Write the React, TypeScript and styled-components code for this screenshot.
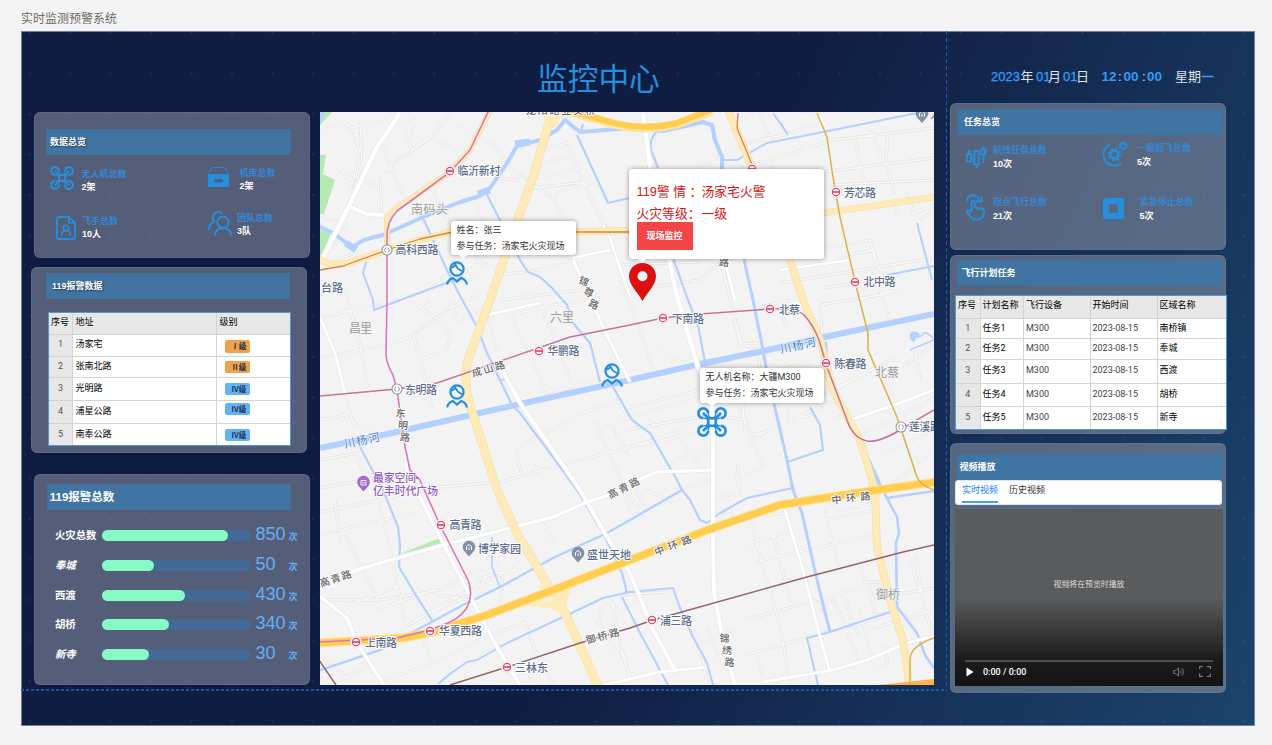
import React from "react";
import styled, { createGlobalStyle, css } from "styled-components";

const cjk = `"Noto Sans CJK SC", sans-serif`;
const BLUE = "#258fdc";

const GlobalStyle = createGlobalStyle`
  *, *::before, *::after { box-sizing: border-box; }
  html, body { margin: 0; padding: 0; background: #f4f4f4; overflow: hidden; }
  body { font-family: "Liberation Sans", ${cjk}; font-size: 9px; color: #333; }
`;

const Page = styled.div`
  width: 1272px;
  height: 745px;
  padding: 0 17px 0 21px;
  display: flex;
  flex-direction: column;
  overflow: hidden;
`;

const PageName = styled.div`
  height: 31px;
  padding-top: 9px;
  font: 12px/17px ${cjk};
  color: #6a6a6a;
`;

const Dashboard = styled.div`
  position: relative;
  width: 1234px;
  height: 695px;
  display: flex;
  align-items: flex-start;
  box-shadow: inset 0 0 0 1px #71809b;
  background:
    radial-gradient(circle at 8.5px 2px, rgba(150, 175, 220, 0.1) 0 0.7px, transparent 1.7px) 0 0 / 40.5px 40.5px,
    linear-gradient(114deg, #101d42 0%, #101d42 52%, #163057 76%, #1c446c 100%);
`;

const MainArea = styled.div`
  width: 926px;
  height: 660px;
  background:
    repeating-linear-gradient(90deg, #1757a6 0 3px, transparent 3px 5px) 0 100% / 100% 2px no-repeat,
    repeating-linear-gradient(180deg, #1f5fa8 0 4px, transparent 4px 7px) 100% 0 / 1px 100% no-repeat;
`;

const TitleBar = styled.div`
  height: 81px;
  padding: 25px 0 0 516px;
`;

const Title = styled.h1`
  margin: 0;
  font: 400 30.7px/42px ${cjk};
  color: ${BLUE};
  white-space: nowrap;
`;

const Columns = styled.div`
  display: flex;
`;

const LeftColumn = styled.div`
  width: 299px;
  display: flex;
  flex-direction: column;
`;

const RightColumn = styled.div`
  width: 307px;
  padding-left: 3px;
  display: flex;
  flex-direction: column;
`;

const Panel = styled.section<{ $h: number; $ml?: number; $mt?: number }>`
  width: 275.5px;
  height: ${(p) => p.$h}px;
  margin: ${(p) => p.$mt ?? 0}px 0 0 ${(p) => p.$ml ?? 0}px;
  border-radius: 6px;
  background: rgba(152, 159, 174, 0.5);
  box-shadow: inset 0 0 0 1px rgba(125, 140, 165, 0.25);
  display: flex;
  flex-direction: column;
  flex: none;
`;

const PanelTitle = styled.h2<{ $w: number; $ml: number; $mt: number; $pl: number; $size?: number; $glow?: boolean }>`
  width: ${(p) => p.$w}px;
  height: 26px;
  margin: ${(p) => p.$mt}px 0 0 ${(p) => p.$ml}px;
  padding-left: ${(p) => p.$pl}px;
  font: 700 ${(p) => p.$size ?? 9}px/24px "Liberation Sans", ${cjk};
  color: #fff;
  background: #4074a3;
  border: 1px solid #476f97;
  white-space: nowrap;
  ${(p) => p.$glow && css`text-shadow: 1px 1px 2px rgba(0, 0, 0, 0.55);`}
`;

const StatGrid = styled.div<{ $cols: string; $rows: string }>`
  display: grid;
  grid-template-columns: ${(p) => p.$cols};
  grid-template-rows: ${(p) => p.$rows};
`;

const StatItem = styled.div<{ $x: number; $y: number }>`
  display: flex;
  align-items: flex-start;
  padding: ${(p) => p.$y}px 0 0 ${(p) => p.$x}px;
`;

const StatIcon = styled.div<{ $w: number; $mt: number }>`
  width: ${(p) => p.$w}px;
  margin-top: ${(p) => p.$mt}px;
  flex: none;
  svg { display: block; }
`;

const StatText = styled.div<{ $lh: number }>`
  font: 700 9px/${(p) => p.$lh}px "Liberation Sans", ${cjk};
  white-space: nowrap;
  color: #fff;
`;

const StatLabel = styled.div`
  font-weight: 700;
  color: #3587d6;
`;

const Table = styled.div<{ $w: number; $ml: number; $mt: number }>`
  width: ${(p) => p.$w}px;
  margin: ${(p) => p.$mt}px 0 0 ${(p) => p.$ml}px;
  border: 1px solid #4d9ad6;
  background: #fff;
`;

const Row = styled.div<{ $cols: string; $h: number; $head?: boolean }>`
  display: grid;
  grid-template-columns: ${(p) => p.$cols};
  height: ${(p) => p.$h}px;
  font: 9px/${(p) => p.$h - 2}px Roboto, ${cjk};
  color: #000;
  background: ${(p) => (p.$head ? "#e7e7e7" : "#fff")};
  & + & { border-top: 1px solid #d4d4d4; }
`;

const Cell = styled.div<{ $tone?: "index" | "num" }>`
  padding-left: 2px;
  white-space: nowrap;
  overflow: hidden;
  & + & { border-left: 1px solid #d4d4d4; }
  ${(p) => p.$tone === "index" && css`background: #e7e7e7; color: #555; padding: 0; text-align: center;`}
  ${(p) => p.$tone === "num" && css`color: #444;`}
`;

const Badge = styled.span<{ $color: string; $mt: number }>`
  display: block;
  width: 25px;
  height: 12.5px;
  margin: ${(p) => p.$mt}px 0 0 6px;
  padding-right: 4px;
  border-radius: 2px;
  background: ${(p) => p.$color};
  font: 700 7.6px/12px ${cjk};
  color: #28324a;
  text-align: right;
`;

const Bars = styled.div`
  padding: 11px 0 0 20.5px;
`;

const BarRow = styled.div`
  display: flex;
  height: 29.8px;
`;

const BarName = styled.div<{ $italic?: boolean }>`
  width: 47px;
  font: ${(p) => (p.$italic ? "italic" : "normal")} 700 10.4px/28px ${cjk};
  color: #fff;
`;

const Track = styled.div`
  width: 149px;
  height: 11px;
  margin-top: 9px;
  border-radius: 6px;
  background: #426a94;
`;

const Fill = styled.div`
  height: 11px;
  border-radius: 6px;
  background: #87fac6;
`;

const BarValue = styled.div`
  width: 37.5px;
  padding-left: 4.5px;
  font: 18px/26px "Liberation Sans", sans-serif;
  color: #62b0f7;
`;

const BarUnit = styled.div`
  font: 700 9px/32px ${cjk};
  color: #62b0f7;
`;

/* ---------- map ---------- */

const MapBox = styled.div`
  position: relative;
  width: 614px;
  height: 573px;
  background: #f3f3f3;
  overflow: hidden;
  > svg { display: block; }
`;

const Pin = styled.div<{ $x: number; $y: number }>`
  position: absolute;
  left: ${(p) => p.$x}px;
  top: ${(p) => p.$y}px;
  svg { display: block; }
`;

const Callout = styled.div<{ $x: number; $y: number; $w: number; $h: number; $tip: number }>`
  position: absolute;
  left: ${(p) => p.$x}px;
  top: ${(p) => p.$y}px;
  width: ${(p) => p.$w}px;
  height: ${(p) => p.$h}px;
  padding: 2px 0 0 5.5px;
  border-radius: 3px;
  background: #fff;
  box-shadow: 0 0 5px rgba(0, 0, 0, 0.4);
  font: 9px/15.5px Roboto, ${cjk};
  color: #333;
  white-space: nowrap;
  &::after {
    content: "";
    position: absolute;
    left: ${(p) => p.$tip}px;
    bottom: -4px;
    border: 4px solid transparent;
    border-top-color: #fff;
    border-bottom: 0;
  }
`;

const AlarmText = styled.div`
  padding-left: 2px;
  font: 12.8px/22px "Liberation Sans", ${cjk};
  color: #d81414;
  display: flex;
`;

const AlarmKey = styled.span`
  width: 65px;
  flex: none;
`;

const WatchButton = styled.button`
  display: block;
  width: 56px;
  height: 28px;
  margin: -3px 0 0 2px;
  padding: 0;
  border: 0;
  background: #f54446;
  font: 700 9px/28px ${cjk};
  color: #fff;
`;

/* ---------- right side ---------- */

const DateLine = styled.div`
  height: 72px;
  padding: 35.5px 0 0 41px;
  display: flex;
  font: 13px/20px "Liberation Sans", ${cjk};
  color: #dfe6f0;
  white-space: nowrap;
`;

const Part = styled.span<{ $w: number; $blue?: boolean; $bold?: boolean }>`
  width: ${(p) => p.$w}px;
  color: ${(p) => (p.$blue ? "#2f9bf7" : "#dfe3ea")};
  font-weight: ${(p) => (p.$bold ? 700 : 400)};
  ${(p) => p.$bold && css`font-size: 13.5px;`}
  ${(p) => p.$blue && !p.$bold && css`-webkit-text-stroke: 0.3px #2f9bf7;`}
`;

const Tabs = styled.div`
  width: 267px;
  height: 25px;
  margin: 0 0 4px 5px;
  padding-left: 6px;
  display: flex;
  gap: 11px;
  border-radius: 3px;
  background: #fff;
  border: 1px solid #dce6f0;
`;

const Tab = styled.div<{ $active?: boolean }>`
  height: 22px;
  font: 9px/18px ${cjk};
  color: ${(p) => (p.$active ? "#1683ff" : "#333")};
  border-bottom: ${(p) => (p.$active ? "2px solid #45a0fb" : "0")};
`;

const Video = styled.div`
  width: 268px;
  height: 177.5px;
  margin-left: 5px;
  display: flex;
  flex-direction: column;
  background: linear-gradient(#5a5b5c 0%, #5a5b5c 50%, #1b1b1b 85%, #141414 100%);
`;

const VideoHint = styled.div`
  padding-top: 66.5px;
  height: 151px;
  text-align: center;
  font: 7.9px/17px ${cjk};
  color: #dcdcdc;
`;

const Seek = styled.div`
  height: 2px;
  margin: 0 10px;
  background: #4f4f4f;
`;

const Controls = styled.div`
  display: flex;
  align-items: center;
  height: 20px;
  padding: 0 12px 0 11px;
  font: 500 9px/20px Roboto, sans-serif;
  color: #fff;
  svg { display: block; }
`;

const Time = styled.span`
  margin-left: 9px;
  flex: 1;
`;

const Speaker = styled.span`
  margin-right: 14px;
`;

/* ---------- icons ---------- */

const DroneIcon = ({ size = 24 }: { size?: number }) => (
  <svg width={size} height={size} viewBox="0 0 24 24" fill="none" stroke={BLUE} strokeWidth="2.1">
    <path d="M8.9 5A3.9 3.9 0 1 0 5 8.9M15.1 5A3.9 3.9 0 1 1 19 8.9M8.9 19A3.9 3.9 0 1 1 5 15.1M15.1 19A3.9 3.9 0 1 0 19 15.1" />
    <path d="M4.8 4.8 9 9M19.2 4.8 15 9M4.8 19.2 9 15M19.2 19.2 15 15" />
    <rect x="9" y="9" width="6" height="6" />
    <path d="M5 8.9Q8 8.8 8.9 11M8.9 5Q8.8 8 11 8.9M15.1 5Q15.2 8 13 8.9M19 8.9Q16 8.8 15.1 11M5 15.1Q8 15.2 8.9 13M8.9 19Q8.8 16 11 15.1M19 15.1Q16 15.2 15.1 13M15.1 19Q15.2 16 13 15.1" strokeWidth="1" />
  </svg>
);

const HangarIcon = () => (
  <svg width="21" height="20" viewBox="0 0 21 20">
    <path d="M.6 7 4.2.6h12.6L20.4 7" fill="none" stroke={BLUE} strokeWidth="1" />
    <path d="M0 7h21v13H0zM7.4 12a1.5 1.5 0 0 0 0 3.2h6.2a1.5 1.5 0 0 0 0-3.2z" fill={BLUE} fillRule="evenodd" />
  </svg>
);

const PilotIcon = () => (
  <svg width="20" height="24" viewBox="0 0 20 24" fill="none" stroke={BLUE} strokeWidth="1.8">
    <path d="M12.8 1H2.4Q1 1 1 2.4v19.2Q1 23 2.4 23h15.2q1.400 0 1.400-1.400V7z" />
    <path d="M12.800 1v5.800H19" strokeWidth="1.500" />
    <circle cx="10" cy="12" r="2.700" strokeWidth="1.600" />
    <path d="M5.400 19.600q.4-5 4.600-5t4.600 5" strokeWidth="1.600" />
  </svg>
);

const TeamIcon = () => (
  <svg width="24" height="25" viewBox="0 0 24 25" fill="none" stroke={BLUE} strokeWidth="1.900">
    <circle cx="15" cy="11.200" r="5.600" />
    <path d="M7 24.500q.6-7.500 8-7.500t8 7.500" />
    <path d="M14.500 3A5.300 5.300 0 1 0 6 10M7 10.500Q1 12.500 1 19" />
  </svg>
);

const RouteIcon = () => (
  <svg width="21" height="23" viewBox="0 0 21 23" fill="none" stroke={BLUE} strokeWidth="1.900">
    <rect x="1.200" y="9" width="4" height="7.600" />
    <path d="M3.200 5v4" />
    <rect x="8.300" y="6" width="4.400" height="13.500" />
    <path d="M10.500 19.500V23" />
    <rect x="15.400" y="4.500" width="4" height="4.500" />
    <path d="M17.400 1v3.500M17.400 9v9" />
  </svg>
);

const GearsIcon = () => (
  <svg width="26" height="26" viewBox="0 0 26 26" fill="none" stroke={BLUE}>
    <path d="M8 3.500A11 11 0 1 0 19.500 22" strokeWidth="2" />
    <circle cx="12.500" cy="13.500" r="3.900" strokeWidth="2.600" />
    <circle cx="12.500" cy="13.500" r="5.700" strokeWidth="2.200" strokeDasharray="2.240 2.240" />
    <circle cx="21" cy="5" r="2.600" strokeWidth="1.700" />
    <circle cx="21" cy="5" r="3.900" strokeWidth="1.500" strokeDasharray="1.530 1.530" />
  </svg>
);

const TapIcon = () => (
  <svg width="21" height="27" viewBox="0 0 21 27" fill="none" stroke={BLUE} strokeWidth="1.900" strokeLinejoin="round">
    <path d="M2.500 7.500Q2 1.500 8 1.200q4.500 0 6.500 5" />
    <path d="M16.500 2.500v5h-5.500" />
    <path d="M6.600 18V8.500q0-1.800 1.600-1.800t1.600 1.800v5l7 1.300q2.200.4 2.200 2.600 0 8-7.500 8.300-4.500 0-7-4.500l-2.800-4q1.600-2.200 4.900.8" />
    <path d="M13 14v2.500M16 14.600v2" strokeWidth="1.300" />
  </svg>
);

const StopIcon = () => (
  <svg width="21" height="21" viewBox="0 0 21 21">
    <path d="M2 0h17q2 0 2 2v17q0 2-2 2H2q-2 0-2-2V2q0-2 2-2zM7.500 6q-1.500 0-1.500 1.500v6q0 1.500 1.500 1.500h6q1.500 0 1.500-1.500v-6Q15 6 13.500 6z" fill={BLUE} fillRule="evenodd" />
  </svg>
);

const PersonIcon = () => (
  <svg width="22" height="24" viewBox="0 0 22 24" fill="none" stroke={BLUE} strokeWidth="2.200">
    <circle cx="11" cy="8" r="6.600" />
    <path d="M4.500 6.500Q8 6.500 9.500 3.500 11 8.500 17 10.500" strokeWidth="1.800" />
    <path d="M1.200 23.500q.3-4.500 5.600-6.500l4.200 3.600 4.200-3.600q5.300 2 5.600 6.500" />
  </svg>
);

const FirePin = () => (
  <svg width="27" height="38" viewBox="0 0 27 38">
    <path d="M13.500 0C6 0 0 5.800 0 13.300 0 22 8.500 29 13.500 38 18.500 29 27 22 27 13.300 27 5.800 21 0 13.500 0zm0 8.300a5 5 0 1 1 0 10 5 5 0 0 1 0-10z" fill="#db1010" fillRule="evenodd" />
  </svg>
);

/* ---------- map drawing ---------- */

const water: [string, number][] = [
  ["M320 448 392 433 480 413 520 404 630 380 700 364 768 350 820 338 934 314", 6],
  ["M318 226 333 233 352 247 364 240 383 235 423 217 460 202 480 196 490 188 507 163 517 146 540 140 557 130 565 120 580 132 630 128 663 131 703 122 712 125 715 140 722 157 722 172", 4],
  ["M515 144 530 142M346 243 356 250M478 194 490 190", 7],
  ["M577 135 608 203 634 197M580 134 583 124", 2.2],
  ["M487 195 500 220 520 260 528 272 540 277 552 288 567 305 573 323 590 343 600 382", 2.200],
  ["M423 218 447 270 457 290 477 327 487 353 512 405 520 413 553 457 577 490 603 533 622 573 627 593", 2.200],
  ["M500 380 507 379", 1.500],
  ["M366 262 363 273 373 300 374 310 427 290 463 277", 2],
  ["M318 671 380 650 413 632 463 605 500 587 553 558 607 533 630 520 682 490", 2.400],
  ["M613 387 632 420 650 433 677 480 682 490 690 500 700 520 707 523 720 513 747 498 793 488", 2.200],
  ["M743 255 753 300 763 350 767 373 787 460 793 490 802 513 817 580 830 632", 3],
  ["M787 462 823 450 820 425 810 407", 2.200],
  ["M818 685 807 638 830 632 890 612", 2],
  ["M673 258 688 300 698 325 705 362", 2.200],
  ["M825 342 827 373 850 420 873 470 883 492", 4],
  ["M877 480 887 498 934 491M887 498 897 517 899 533 896 543 897 607 917 633 925 655 934 668", 2.600],
  ["M773 113 788 135M722 160 737 160 767 143 833 130 922 112M788 135 780 122", 2],
  ["M651 140 656 132M651 140 651 150 658 168", 2.200],
  ["M917 223 932 280M887 275 934 266M916 318l18-3", 2],
  ["M438 684 450 674 467 662 477 660 507 643 563 617 603 598 630 592 673 588 678 603 693 637 707 663 713 685M622 597 640 633 668 685", 2],
  ["M360 447 383 490 398 527 400 545 399 567 417 597 433 622", 2.200],
  ["M492 537 492 567 500 587", 1.700],
  ["M910 350 934 340M913 336q8 2 10-2t10 4", 1.500],
];

const minor = [
  "M322 130 345 122 352 128 378 122 395 113M345 122 360 150 352 185 342 172M360 120 362 165 347 208",
  "M380 140 400 190 425 225M400 122 412 150 432 135 450 115M432 137 460 152 448 172M403 125 415 120 412 133 402 130",
  "M382 214 380 180 392 165 430 138M457 125 490 143 520 175 553 198 560 215 575 235",
  "M340 170 378 187M320 215 347 225 335 245M335 260 365 250M430 185 445 217 480 260",
  "M545 148 568 143 578 172 607 230M540 165 575 155M536 178 580 168M533 188 585 182M553 198 562 190 595 182",
  "M477 205 480 225M498 178 520 180M450 262 465 268 470 280",
  "M500 275 540 270 572 260M500 300 583 290M430 285 447 275M475 262 500 268 510 272",
  "M320 320 340 313 420 293 475 275M320 358 386 345 410 337 450 308 478 295M345 290 360 345 368 388",
  "M414 338 422 365 432 410M420 360 445 350 451 338 440 320 418 307 430 300M450 300 458 320 485 308",
  "M510 315 540 377 545 388M510 315 600 295M540 303 560 352 573 387M545 393 640 370M487 315 497 350",
  "M320 420 345 415 357 425 375 430M345 393 355 430M320 460 357 453 362 470 400 480M320 488 390 475 405 470",
  "M405 490 500 482 560 465 620 450 685 430M521 472 516 452 527 442 590 410 625 400M535 462 541 472",
  "M595 422 612 460 625 490M600 430 612 425 628 455M617 395 628 420",
  "M320 512 380 500 420 490M320 535 370 523 415 513M335 500 340 545M374 480 390 550 405 620M345 535 378 600",
  "M320 600 380 600 440 590 470 575 500 563M350 605 400 585M400 630 460 595 500 575 520 562M375 610 435 590",
  "M478 590 480 578 510 570M500 610 503 575M540 520 555 543M415 620 470 595M440 595 470 600",
  "M320 655 350 680M320 690 375 663M383 680 430 665 480 640 525 622 535 650 553 685M423 640 432 665",
  "M600 625 600 610 612 604 622 650 632 685M610 598 615 608M597 620 615 650",
  "M658 120 653 145M697 168 740 145 790 133 820 123M660 190 695 173M760 113 770 140",
  "M740 120 775 105 820 115M770 160 778 185M697 185 770 160 833 140 934 128M800 140 803 150M870 130 888 170 895 195M855 140 862 175 870 195M888 135 886 160",
  "M775 178 934 158M830 185 934 180M905 190 915 215M895 205 898 215",
  "M780 283 934 258M805 253 870 240 885 285M835 265 845 255 875 250M880 290 890 320M860 300 893 290",
  "M870 240 875 260M825 288 900 275M820 305 880 295 900 290M900 260 890 270M910 215 934 205M920 220 934 210",
  "M620 265 700 262M630 290 700 280 720 262 730 258M620 280 640 330 655 375M720 260 728 290 741 343 755 350",
  "M722 262 740 344 757 343 760 370M650 375 730 360 768 345M660 350 700 372M755 308 790 300M780 310 786 325",
  "M740 370 745 430M620 410 700 390M620 420 690 400M625 430 712 415 745 420M735 400 752 435 765 432",
  "M665 465 700 448M680 440 702 468 712 470M640 445 712 430M750 440 765 465 745 475M737 462 740 485M780 370 790 420 812 415",
  "M750 440 770 430 835 400M760 375 812 362M790 375 800 405M820 300 822 335M825 395 850 382M830 420 860 410",
  "M850 435 870 430 934 398M880 455 934 430M888 380 893 405M885 490 934 450M905 365 934 345M915 350 920 380M835 388 895 358",
  "M625 490 640 510M620 480 630 510M635 485 645 510M645 490 673 502M676 490 713 480M713 500 740 492 735 470",
  "M720 518 730 510 735 520 750 513 765 575 780 625 790 685M740 553 757 545M752 542 790 532M755 562 880 533M773 535 793 610",
  "M825 515 828 500 840 510 870 504M825 515 840 570M825 520 875 510M745 620 870 585M870 585 875 615 885 613",
  "M860 565 865 582 880 582M707 627 720 660M705 640 735 630M745 655 890 615M757 655 765 685M830 595 843 620 860 665",
  "M860 610 875 670 888 665 885 645M915 555 925 610 934 640M895 595 934 588M910 560 920 590M770 590 800 575",
  "M620 595 665 592 675 605 700 640 707 685M620 650 634 685M845 598 858 635M620 610 640 600",
  "M850 625 870 620M868 630 934 610M820 600 825 615M770 515 790 512",
].join("");

const major: [string, number][] = [
  ["M400 113 377 147 347 210 320 263", 4.500],
  ["M348 206 367 214 383 215", 4],
  ["M320 317 335 353 345 393", 3],
  ["M497 360 520 403 580 490 607 537 630 573 653 630 675 670", 4],
  ["M320 583 363 568 443 545 553 517 587 502 610 495 630 483 657 472 712 470", 3.500],
  ["M713 433 713 540 714 593 723 640 735 685", 4],
  ["M643 113 650 167 670 263 676 293 698 367 712 403 713 433", 4.500],
  ["M420 497 467 590 493 640 520 685M405 450 407 475 420 497", 3.500],
  ["M318 595 347 618 357 643 384 685", 3.500],
  ["M573 260 587 290 603 327 630 382M572 258 610 250M607 230 630 297M603 225 607 232", 3],
  ["M604 685 660 672 707 667", 3],
  ["M763 682 833 670 867 660 907 643 934 636", 3],
  ["M785 510 803 570 820 637 830 672", 3],
  ["M850 420 900 403 934 390M487 315 540 303M725 262 735 300", 3],
  ["M817 113 825 125M780 270 850 260", 2.500],
];

const yellow: [string, number][] = [
  ["M490 110 470 150 450 172 397 208 387 217 387 250", 5],
  ["M318 258q10 9 30 5L387 250 420 240 450 232 573 232 640 230 780 218 823 213 934 197", 6],
  ["M552 112 533 177 507 250 490 300 467 363Q464 385 470 405L497 490 517 533 543 577 567 617 600 690", 8],
  ["M728 110 750 163 790 260 803 300 820 340 833 390 860 440 875 490 877 547 890 600 903 640 910 690", 7],
];

const metro: [string, string, number][] = [
  ["M489 110 470 150 450 172 397 211Q387 222 387 235L387 300 386 355Q387 365 393 375L397 390 405 447 410 470 420 480 440 525 468 580Q474 595 466 609 458 620 443 625L430 630 397 638 320 642", "#d977bb", 1.600],
  ["M320 396 397 389 437 383 570 337 630 325 663 318 700 314 770 309Q795 308 803 314 813 324 819 340L827 367 847 420Q853 438 867 441 880 443 903 428L934 410", "#c274a0", 1.500],
  ["M320 270 343 266 387 250 420 239 453 232 630 232M738 113 737 128 753 167", "#d98545", 1.300],
  ["M817 113 827 137 833 177 840 217 857 290 868 333 868 350 897 417 917 477Q920 485 934 490M910 685 910 660Q910 646 934 638", "#dcb147", 1.500],
  ["M450 685 507 667 580 643 630 628 653 620 807 577 903 552 934 545M319 660 336 685", "#96626f", 1.500],
];

const stations: [number, number][] = [
  [450, 171], [836, 192], [855, 282], [663, 318], [770, 309], [539, 351], [826, 363], [441, 525], [430, 631], [356, 642], [507, 667], [652, 620], [752, 169],
];
const hubs: [number, number][] = [[387, 250], [397, 389], [901, 427]];

type Label = [text: string, x: number, y: number, width: number, rotate?: number];
const places: Label[] = [
  ["临沂新村", 457.500, 175, 43], ["高科西路", 395.500, 254, 43], ["台路", 321, 292, 22], ["芳芯路", 844, 196.500, 32],
  ["北中路", 863.500, 286, 32], ["下南路", 672, 323, 32], ["北蔡", 779, 313.500, 21], ["华鹏路", 547.500, 355, 32],
  ["陈春路", 834.500, 367.500, 32], ["莲溪路", 909, 431, 32], ["东明路", 405, 394, 32], ["高青路", 449.500, 529, 32],
  ["博学家园", 478, 553, 43], ["盛世天地", 587, 559, 44], ["华夏西路", 439, 635, 43], ["上南路", 365, 647, 32],
  ["三林东", 515, 671.500, 33], ["浦三路", 660, 625, 32],
];
const areas: Label[] = [
  ["南码头", 411, 214, 37], ["昌里", 349, 333, 23], ["六里", 550, 322, 24], ["北蔡", 875, 377, 24], ["御桥", 876, 599, 24],
];
const roads: Label[] = [
  ["成山路", 473, 377, 34, -16], ["高青路", 610, 499, 34, -27], ["高青路", 321, 587, 33, -18], ["中环路", 656, 556, 39, -21],
  ["中环路", 832, 504, 39, -7], ["御桥路", 587, 644, 34, -15], ["龙阳路立交桥", 526, 114, 69],
];
const vertical: [string, number, number, number][] = [
  ["锦", 584, 281, -60], ["尊", 589, 292, -60], ["路", 594, 304, -60], ["东", 400.500, 413, 0], ["明", 403, 425, 0], ["路", 405, 437, 0],
  ["锦", 724.500, 638, 0], ["绣", 727, 650, 0], ["路", 729.500, 662, 0], ["路", 724, 262, 0],
];

const MapDrawing = () => (
  <svg width="614" height="573" viewBox="320 112 614 573" fill="none" strokeLinejoin="round" fontFamily={`"Noto Sans CJK SC", sans-serif`}>
    <path d="M320 155h6l-3 19 12 6-11 34h-4zM320 230l11 3-9 22h-2zM320 125l12-13h-7l-5 6zM400 554l40-16 2 6z" fill="#b5eab0" />
    <path d="M910 334q2-5 9-1 2 5-3 5l-2 4q-5-2-4-8zM320 112l5 0-5 13z" fill="#b3d1ff" />
    <path d={minor} stroke="#e2e2e2" strokeWidth="2.800" />
    <path d={minor} stroke="#f8f8f8" strokeWidth="1.500" />
    {water.map(([d, w], i) => <path key={i} d={d} stroke="#b3d0ff" strokeWidth={w} />)}
    {major.map(([d, w], i) => <path key={i} d={d} stroke="#e4e4e4" strokeWidth={w + 1} />)}
    {major.map(([d, w], i) => <path key={i} d={d} stroke="#fff" strokeWidth={w} />)}
    {yellow.map(([d, w], i) => <path key={i} d={d} stroke="#f7dfa3" strokeWidth={w + 0.800} />)}
    {yellow.map(([d, w], i) => <path key={i} d={d} stroke="#ffebb9" strokeWidth={w - 0.500} />)}
    <path d="M541 112h26q-7 4-11 16h-8zM520 607q25-9 20-30l12 12 28-8q-17 14-13 36-14-13-47-10zM493 475l12 40 6-2z" fill="#ffebb9" />
    <path d="M541 600l12-3-2 5z" fill="#f3f3f3" />
    <path d="M320 643 403 638 433 632 487 615 553 590 630 560 713 528 780 505 830 497 870 491 936 482" stroke="#ffe3a0" strokeWidth="9" />
    <path d="M320 643 403 638 433 632 487 615 553 590 630 560 713 528 780 505 830 497 870 491 936 482" stroke="#ffcd4f" strokeWidth="7" />
    <path d="M567 111 603 121Q640 133 677 124L712 111" stroke="#ffe3a0" strokeWidth="9" />
    <path d="M567 110 603 120Q640 132 677 123L710 110" stroke="#ffcd4f" strokeWidth="6" />
    <path d="M878 685l56-6v6z" fill="#ffb14e" />
    {metro.map(([d, c, w], i) => <path key={i} d={d} stroke={c} strokeWidth={w} />)}

    {stations.map(([x, y], i) => (
      <g key={i} stroke="#e6446a">
        <circle cx={x} cy={y} r="5.600" fill="#fff" stroke="#ddd" strokeWidth=".6" />
        <circle cx={x} cy={y} r="3.700" strokeWidth="1.200" />
        <path d={`M${x - 4} ${y}h8`} strokeWidth="1.700" />
      </g>
    ))}
    {hubs.map(([x, y], i) => (
      <g key={i} stroke="#8f98a6">
        <circle cx={x} cy={y} r="5" fill="#fff" strokeWidth="1.100" />
        <path d={`M${x - 1} ${y - 2.500}q-3 2.500 0 5M${x + 1} ${y - 2.500}q3 2.500 0 5`} strokeWidth="1" />
      </g>
    ))}
    {[[469, 548], [578, 554], [922, 114.500]].map(([x, y], i) => (
      <g key={i}>
        <path d={`M${x} ${y + 8.500}l-4-4.500a6.300 6.300 0 1 1 8 0z`} fill="#8190a5" />
        <path d={`M${x - 2.500} ${y + 2}v-3.500l2.500-2 2.500 2V${y + 2}M${x} ${y + 2}v-2.500`} stroke="#fff" strokeWidth="1" />
      </g>
    ))}
    <path d="M363.500 491.500l-4-4.500a6.300 6.300 0 1 1 8 0z" fill="#a868d2" />
    <path d="M361 480.500h5v4.500h-5zM362.200 482.500q1.300 1.300 2.600 0" stroke="#fff" strokeWidth=".9" />

    <g fontSize="11" fontWeight="500" fill="#5b6d8c" stroke="#fff" strokeWidth="2" paintOrder="stroke">
      {places.map(([t, x, y, w]) => <text key={t + x} x={x} y={y} textLength={w}>{t}</text>)}
    </g>
    <g fontSize="10.800" fontWeight="500" fill="#8e5cc0" stroke="#fff" strokeWidth="1.500" paintOrder="stroke">
      <text x="373" y="482" textLength="43">最家空间</text>
      <circle cx="417" cy="478" r="1" stroke="none" />
      <text x="373" y="494.500" textLength="65">亿丰时代广场</text>
    </g>
    <g fontSize="12" fill="#9c9c9c" stroke="#f6f6f6" strokeWidth="1.500" paintOrder="stroke">
      {areas.map(([t, x, y, w]) => <text key={t + x} x={x} y={y} textLength={w}>{t}</text>)}
    </g>
    <g fontSize="10" fontWeight="500" fill="#666" stroke="#fff" strokeWidth="1.800" paintOrder="stroke">
      {roads.map(([t, x, y, w, r]) => (
        <text key={t + x} x={x} y={y} textLength={w} transform={r ? `rotate(${r} ${x} ${y})` : undefined}>{t}</text>
      ))}
      {vertical.map(([t, x, y, r], i) => (
        <text key={i} x={x} y={y + 4} textAnchor="middle" transform={`rotate(${r ? r + 85 : 5} ${x} ${y})`}>{t}</text>
      ))}
    </g>
    <g fontSize="11" fill="#4f7fc4" stroke="#e6f0ff" strokeWidth="1.500" paintOrder="stroke">
      <text x="345" y="448" textLength="36" transform="rotate(-12 345 448)">川杨河</text>
      <text x="781" y="353" textLength="36" transform="rotate(-12 781 353)">川杨河</text>
    </g>
    <text x="930" y="119" fontSize="11" fill="#5b6d8c">人</text>
  </svg>
);

/* ---------- data ---------- */

const alarms = [
  { h: 21.500, name: "汤家宅", level: "Ⅰ", color: "#eda24b", mt: 5 },
  { h: 21, name: "张南北路", level: "Ⅱ", color: "#eda24b", mt: 4 },
  { h: 23, name: "光明路", level: "Ⅳ", color: "#62b2f7", mt: 5 },
  { h: 23, name: "浦星公路", level: "Ⅳ", color: "#62b2f7", mt: 2 },
  { h: 22.500, name: "南奉公路", level: "Ⅳ", color: "#62b2f7", mt: 5 },
];

const totals = [
  { name: "火灾总数", value: 850, fill: 126 },
  { name: "奉城", value: 50, fill: 52.500, italic: true },
  { name: "西渡", value: 430, fill: 83.500 },
  { name: "胡桥", value: 340, fill: 67 },
  { name: "新寺", value: 30, fill: 47.500, italic: true },
];

const plans = [
  { h: 20, name: "任务1", area: "南桥镇" },
  { h: 21.500, name: "任务2", area: "奉城" },
  { h: 23.500, name: "任务3", area: "西渡" },
  { h: 23, name: "任务4", area: "胡桥" },
  { h: 23.500, name: "任务5", area: "新寺" },
];

interface StatProps {
  icon: React.ReactNode;
  label: string;
  value: string;
  x: number;
  y: number;
  iconTop: number;
  iconBox: number;
  line: number;
}

const Stat = ({ icon, label, value, x, y, iconTop, iconBox, line }: StatProps) => (
  <StatItem $x={x} $y={y}>
    <StatIcon $w={iconBox} $mt={iconTop}>{icon}</StatIcon>
    <StatText $lh={line}>
      <StatLabel>{label}</StatLabel>
      <div>{value}</div>
    </StatText>
  </StatItem>
);

const alarmCols = "23.500px 144px 1fr";
const planCols = "23.500px 43.500px 66.500px 67px 1fr";

export default function App() {
  return (
    <Page>
      <GlobalStyle />
      <PageName>实时监测预警系统</PageName>
      <Dashboard>
        <MainArea>
          <TitleBar><Title>监控中心</Title></TitleBar>
          <Columns>
            <LeftColumn>
              <Panel $h={146} $ml={13.400}>
                <PanelTitle $w={245} $ml={11.600} $mt={17} $pl={3} $glow>数据总览</PanelTitle>
                <StatGrid $cols="165.500px 1fr" $rows="48px 55px">
                  <Stat icon={<DroneIcon />} label="无人机总数" value="2架" x={15.500} y={12.500} iconTop={-2} iconBox={31.500} line={13} />
                  <Stat icon={<HangarIcon />} label="机库总数" value="2架" x={8} y={11.500} iconTop={0.500} iconBox={31.500} line={13} />
                  <Stat icon={<PilotIcon />} label="飞手总数" value="10人" x={21.500} y={11.500} iconTop={1.500} iconBox={26} line={13} />
                  <Stat icon={<TeamIcon />} label="团队总数" value="3队" x={8.500} y={8.500} iconTop={-1} iconBox={28.500} line={13} />
                </StatGrid>
              </Panel>
              <Panel $h={186} $ml={10.400} $mt={9}>
                <PanelTitle $w={244.500} $ml={14.600} $mt={6} $pl={5} $glow>119报警数据</PanelTitle>
                <Table $w={243} $ml={16.500} $mt={13}>
                  <Row $cols={alarmCols} $h={21} $head>
                    <Cell>序号</Cell><Cell>地址</Cell><Cell>级别</Cell>
                  </Row>
                  {alarms.map((a, i) => (
                    <Row key={a.name} $cols={alarmCols} $h={a.h}>
                      <Cell $tone="index">{i + 1}</Cell>
                      <Cell>{a.name}</Cell>
                      <Cell><Badge $color={a.color} $mt={a.mt}>{a.level}级</Badge></Cell>
                    </Row>
                  ))}
                </Table>
              </Panel>
              <Panel $h={211} $ml={13.400} $mt={21}>
                <PanelTitle $w={244.500} $ml={12.400} $mt={10} $pl={2} $size={11.500}>119报警总数</PanelTitle>
                <Bars>
                  {totals.map((t) => (
                    <BarRow key={t.name}>
                      <BarName $italic={t.italic}>{t.name}</BarName>
                      <Track><Fill style={{ width: t.fill }} /></Track>
                      <BarValue>{t.value}</BarValue>
                      <BarUnit>次</BarUnit>
                    </BarRow>
                  ))}
                </Bars>
              </Panel>
            </LeftColumn>

            <MapBox>
              <MapDrawing />
              <Pin $x={126} $y={149}><PersonIcon /></Pin>
              <Pin $x={126} $y={272}><PersonIcon /></Pin>
              <Pin $x={280.500} $y={251}><PersonIcon /></Pin>
              <Pin $x={308.500} $y={151}><FirePin /></Pin>
              <Pin $x={376.500} $y={295}><DroneIcon size={30} /></Pin>
              <Callout $x={131} $y={109} $w={125} $h={34} $tip={8}>
                <div>姓名：张三</div>
                <div>参与任务：汤家宅火灾现场</div>
              </Callout>
              <Callout $x={380} $y={256} $w={124} $h={35} $tip={8}>
                <div>无人机名称：大疆M300</div>
                <div>参与任务：汤家宅火灾现场</div>
              </Callout>
              <Callout $x={309} $y={57} $w={195} $h={90} $tip={9} style={{ paddingTop: 12 }}>
                <AlarmText><AlarmKey>119警 情 ：</AlarmKey>汤家宅火警</AlarmText>
                <AlarmText><AlarmKey>火灾等级：</AlarmKey>一级</AlarmText>
                <WatchButton>现场监控</WatchButton>
              </Callout>
            </MapBox>
          </Columns>
        </MainArea>

        <RightColumn>
          <DateLine>
            <Part $w={29.500} $blue>2023</Part><Part $w={15.500}>年</Part>
            <Part $w={12} $blue>01</Part><Part $w={15}>月</Part>
            <Part $w={13} $blue>01</Part><Part $w={25.500}>日</Part>
            <Part $w={16.500} $blue $bold>12</Part><Part $w={5.500}>:</Part>
            <Part $w={18.500} $blue $bold>00</Part><Part $w={5}>:</Part>
            <Part $w={28} $blue $bold>00</Part>
            <Part $w={26}>星期</Part><Part $w={13} $blue>一</Part>
          </DateLine>
          <Panel $h={146.500}>
            <PanelTitle $w={266} $ml={7} $mt={6} $pl={6}>任务总览</PanelTitle>
            <StatGrid $cols="146px 1fr" $rows="50px 60px">
              <Stat icon={<RouteIcon />} label="航线任务总数" value="10次" x={15.500} y={8} iconTop={2} iconBox={27.500} line={14} />
              <Stat icon={<GearsIcon />} label="一键起飞总数" value="5次" x={6} y={6} iconTop={0} iconBox={35} line={14} />
              <Stat icon={<TapIcon />} label="指点飞行总数" value="21次" x={15} y={10} iconTop={-1.500} iconBox={28} line={14} />
              <Stat icon={<StopIcon />} label="紧急停止总数" value="5次" x={7} y={10} iconTop={3} iconBox={36.500} line={14} />
            </StatGrid>
          </Panel>
          <Panel $h={179} $mt={5.500}>
            <PanelTitle $w={266} $ml={6.500} $mt={5} $pl={4}>飞行计划任务</PanelTitle>
            <Table $w={272} $ml={5} $mt={9}>
              <Row $cols={planCols} $h={21.500} $head>
                <Cell>序号</Cell><Cell>计划名称</Cell><Cell>飞行设备</Cell><Cell>开始时间</Cell><Cell>区域名称</Cell>
              </Row>
              {plans.map((p, i) => (
                <Row key={p.name} $cols={planCols} $h={p.h}>
                  <Cell $tone="index">{i + 1}</Cell>
                  <Cell>{p.name}</Cell>
                  <Cell $tone="num">M300</Cell>
                  <Cell $tone="num">2023-08-15</Cell>
                  <Cell>{p.area}</Cell>
                </Row>
              ))}
            </Table>
          </Panel>
          <Panel $h={250} $mt={9}>
            <PanelTitle $w={266} $ml={6.500} $mt={10.500} $pl={2}>视频播放</PanelTitle>
            <Tabs>
              <Tab $active>实时视频</Tab>
              <Tab>历史视频</Tab>
            </Tabs>
            <Video>
              <VideoHint>视频将在预览时播放</VideoHint>
              <Seek />
              <Controls>
                <svg width="8" height="10" viewBox="0 0 8 10"><path d="M.5.500 7.500 5 .5 9.500z" fill="#fff" /></svg>
                <Time>0:00 / 0:00</Time>
                <Speaker>
                  <svg width="12" height="10" viewBox="0 0 12 10" fill="none" stroke="#777" strokeWidth="1">
                    <path d="M.6 3.500h2L5.500 1v8L2.600 6.500h-2zM7.300 3.300q1.500 1.700 0 3.400M8.800 1.300q3.400 3.700 0 7.400" />
                  </svg>
                </Speaker>
                <svg width="12" height="11" viewBox="0 0 12 11" fill="none" stroke="#777" strokeWidth="1.200">
                  <path d="M.6 3V.6H4M8 .6h3.400V3M11.400 7.500v2.900H8M4 10.400H.6V7.500" />
                </svg>
              </Controls>
            </Video>
          </Panel>
        </RightColumn>
      </Dashboard>
    </Page>
  );
}
